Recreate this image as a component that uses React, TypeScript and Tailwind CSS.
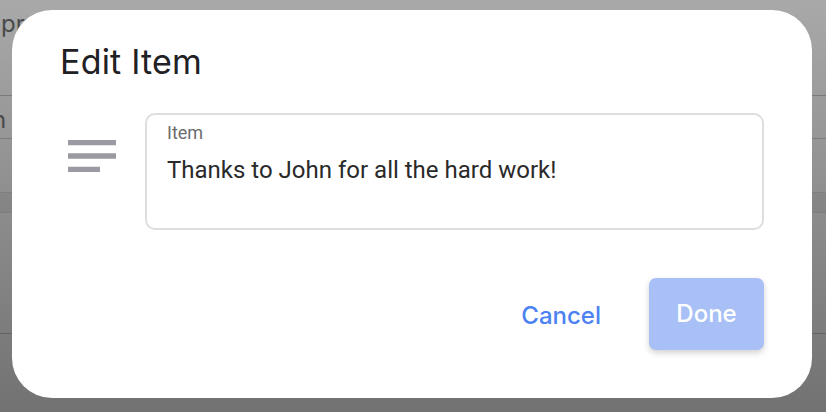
import { MdNotes } from 'react-icons/md';

export default function App() {
  return (
    <div className="relative w-[826px] h-[412px] overflow-hidden bg-gradient-to-b from-[#a9a9a9] to-[#727272] font-['Inter',sans-serif]">
      {/* page behind the overlay */}
      <div className="flex flex-col">
        <div className="h-[95px] pl-[1px] pt-[6px] text-[24px] text-[#4a4a4a]">pr</div>
        <div className="h-px bg-[#7a7a7a]" />
        <div className="h-[42px] pt-[6px] text-[24px] text-[#4a4a4a] -ml-[8px]">n</div>
        <div className="h-px bg-[#7c7c7c]" />
        <div className="h-[53px]" />
        <div className="h-[21px] bg-black/5 border-y border-black/5" />
        <div className="h-[120px]" />
        <div className="h-px bg-black/20" />
      </div>

      {/* dialog */}
      <div className="absolute left-[12px] top-[10px] w-[800px] h-[388px] rounded-[40px] bg-white px-[48px] pt-[31px]">
        <h1 className="text-[34px] leading-[42px] font-normal text-[#1f2125] tracking-[0.2px]">Edit Item</h1>

        <div className="flex mt-[30px]">
          <MdNotes className="w-[64px] h-[64px] mt-[11px] shrink-0 text-[#9b9aa3]" />
          <div className="ml-[21px] flex-1 h-[117px] rounded-[10px] border-2 border-[#dedede] px-[20px] pt-[6px] font-['Roboto',sans-serif]">
            <div className="text-[18px] leading-[24px] text-[#6d6d6d]">Item</div>
            <div className="mt-[9px] text-[24px] leading-[32px] text-[#2a2a2a]">Thanks to John for all the hard work!</div>
          </div>
        </div>

        <div className="flex justify-end items-center mt-[48px]">
          <button className="text-[24px] font-medium text-[#4c82f2] px-[10px] h-[72px] pt-[3px]">Cancel</button>
          <button className="ml-[38px] w-[115px] h-[72px] rounded-[7px] bg-[#a8c0f6] text-white text-[24px] font-medium shadow-[0_3px_6px_rgba(0,0,0,0.18)]">
            Done
          </button>
        </div>
      </div>
    </div>
  );
}
